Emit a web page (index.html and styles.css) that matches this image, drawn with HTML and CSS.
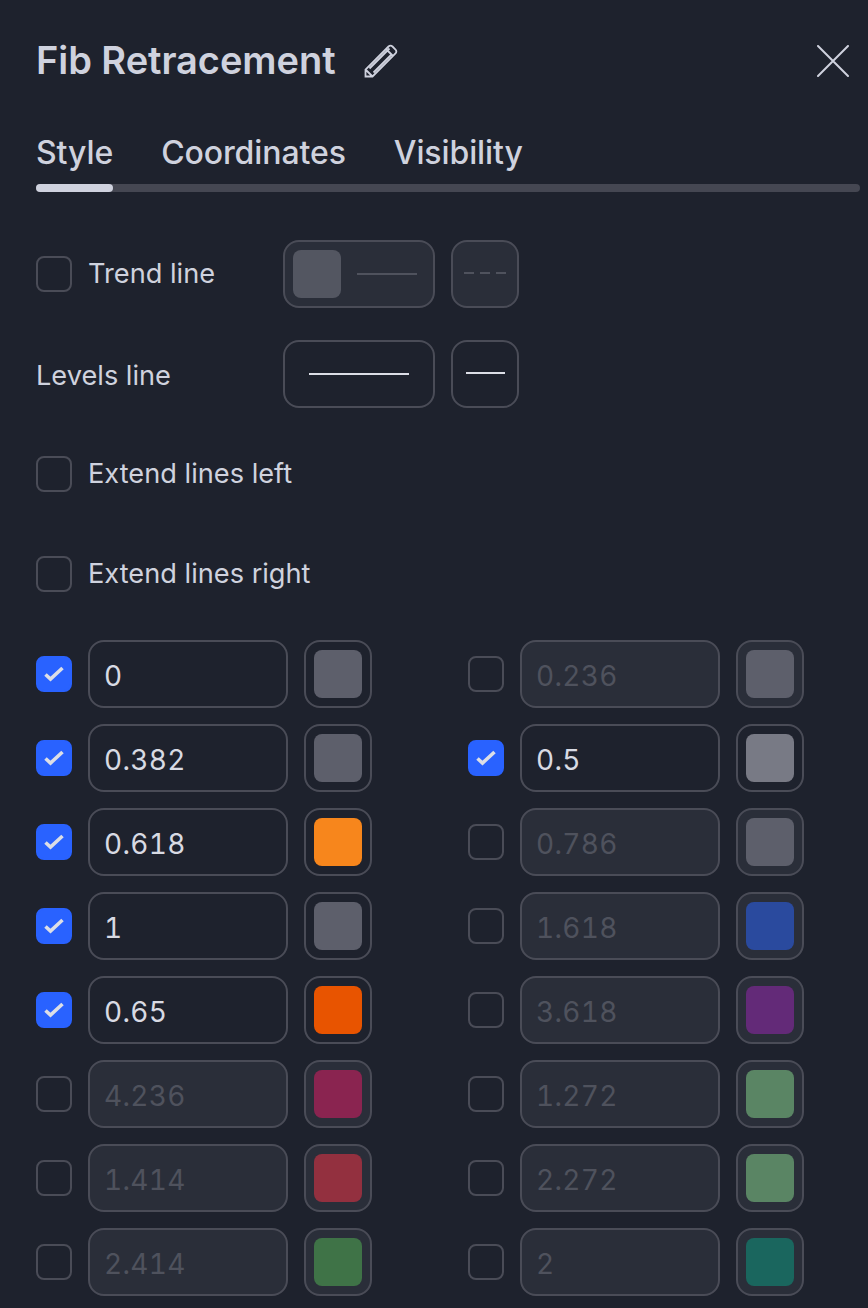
FILE: index.html
```html
<!DOCTYPE html>
<html lang="en">
<head>
<meta charset="utf-8">
<title>Fib Retracement</title>
<link rel="stylesheet" href="styles.css">
</head>
<body>
<div class="panel">
  <header class="head">
    <h1 class="title">Fib Retracement</h1>
    <svg class="pencil" viewBox="0 0 34 34" fill="none" stroke="#cfd2de" stroke-width="1.800"><path d="M1.500 32.500V25.500L24.500 2.500Q26.500 .8 28.500 2.500L31.500 5.500Q33.200 7.500 31.500 9.500L8.500 32.500ZM1.500 25.500L8.500 32.500M22 5L29 12M5.500 24.500L25.500 4.500M9.500 28.500L27.500 10.500"/></svg>
    <svg class="close" viewBox="0 0 32 32" fill="none" stroke="#cfd2de" stroke-width="2" stroke-linecap="round"><path d="M1 1L31 31M31 1L1 31"/></svg>
  </header>
  <nav class="tabs">
    <span class="tab">Style</span>
    <span class="tab">Coordinates</span>
    <span class="tab">Visibility</span>
  </nav>
  <div class="track"><div class="thumb"></div></div>

  <div class="opt opt-first">
    <div class="opt-label"><span class="check"></span><span class="opt-text">Trend line</span></div>
    <div class="field line-wide off"><span class="swatch sw-mid"></span><span class="rule rule-dim"></span></div>
    <div class="field line-small off"><span class="rule-dash"></span></div>
  </div>
  <div class="opt opt-levels">
    <div class="opt-label"><span class="opt-text opt-text-low">Levels line</span></div>
    <div class="field line-wide center"><span class="rule rule-long"></span></div>
    <div class="field line-small"><span class="rule rule-short"></span></div>
  </div>
  <div class="opt opt-left"><div class="opt-label"><span class="check"></span><span class="opt-text">Extend lines left</span></div></div>
  <div class="opt opt-right"><div class="opt-label"><span class="check"></span><span class="opt-text">Extend lines right</span></div></div>

  <div class="levels">
    <div class="lv"><span class="check on"><svg viewBox="0 0 20 16"><path d="M1.500 8.500L6.500 13L18.500 2"/></svg></span><div class="num">0</div><div class="box"><span class="swatch" style="background:#5d5f6b"></span></div></div>
    <div class="lv"><span class="check"></span><div class="num off">0.236</div><div class="box off"><span class="swatch" style="background:#5d5f6b"></span></div></div>

    <div class="lv"><span class="check on"><svg viewBox="0 0 20 16"><path d="M1.500 8.500L6.500 13L18.500 2"/></svg></span><div class="num">0.382</div><div class="box"><span class="swatch" style="background:#5d5f6b"></span></div></div>
    <div class="lv"><span class="check on"><svg viewBox="0 0 20 16"><path d="M1.500 8.500L6.500 13L18.500 2"/></svg></span><div class="num">0.5</div><div class="box"><span class="swatch" style="background:#787a85"></span></div></div>

    <div class="lv"><span class="check on"><svg viewBox="0 0 20 16"><path d="M1.500 8.500L6.500 13L18.500 2"/></svg></span><div class="num">0.618</div><div class="box"><span class="swatch" style="background:#f7861c"></span></div></div>
    <div class="lv"><span class="check"></span><div class="num off">0.786</div><div class="box off"><span class="swatch" style="background:#5d5f6b"></span></div></div>

    <div class="lv"><span class="check on"><svg viewBox="0 0 20 16"><path d="M1.500 8.500L6.500 13L18.500 2"/></svg></span><div class="num">1</div><div class="box"><span class="swatch" style="background:#5d5f6b"></span></div></div>
    <div class="lv"><span class="check"></span><div class="num off">1.618</div><div class="box off"><span class="swatch" style="background:#2a4a9e"></span></div></div>

    <div class="lv"><span class="check on"><svg viewBox="0 0 20 16"><path d="M1.500 8.500L6.500 13L18.500 2"/></svg></span><div class="num">0.65</div><div class="box"><span class="swatch" style="background:#e85400"></span></div></div>
    <div class="lv"><span class="check"></span><div class="num off">3.618</div><div class="box off"><span class="swatch" style="background:#632a78"></span></div></div>

    <div class="lv"><span class="check"></span><div class="num off">4.236</div><div class="box off"><span class="swatch" style="background:#8a2450"></span></div></div>
    <div class="lv"><span class="check"></span><div class="num off">1.272</div><div class="box off"><span class="swatch" style="background:#5a8564"></span></div></div>

    <div class="lv"><span class="check"></span><div class="num off">1.414</div><div class="box off"><span class="swatch" style="background:#93303f"></span></div></div>
    <div class="lv"><span class="check"></span><div class="num off">2.272</div><div class="box off"><span class="swatch" style="background:#5a8564"></span></div></div>

    <div class="lv"><span class="check"></span><div class="num off">2.414</div><div class="box off"><span class="swatch" style="background:#3f7347"></span></div></div>
    <div class="lv"><span class="check"></span><div class="num off">2</div><div class="box off"><span class="swatch" style="background:#1a665e"></span></div></div>
  </div>
</div>
</body>
</html>
```

FILE: styles.css
```css
* { box-sizing: border-box; }
html, body { margin: 0; height: 100%; }
body {
  background: #1e222d;
  color: #cfd2de;
  font-family: Inter, "Liberation Sans", sans-serif;
  overflow: hidden;
}
.panel { width: 868px; height: 1308px; padding: 36px 8px 0 36px; overflow: hidden; }
.head { display: flex; align-items: center; height: 50px; }
.title { margin: 0 0 2px; font-size: 38px; font-weight: 600; line-height: 48px; white-space: nowrap; letter-spacing: -.05px; }
.pencil { width: 34px; height: 34px; margin-left: 28px; }
.close { width: 32px; height: 32px; margin-left: auto; margin-right: 11px; }
.tabs { display: flex; gap: 48px; margin-top: 44px; height: 46px; }
.tab { position: relative; top: 1px; font-size: 32px; font-weight: 500; line-height: 44px; letter-spacing: -.1px; }
.track { height: 8px; margin-top: 8px; background: #454752; border-radius: 4px; }
.thumb { width: 77px; height: 8px; background: #cfd2de; border-radius: 4px; }
.opt { display: flex; align-items: center; gap: 16px; height: 68px; font-size: 27.200px; }
.opt-first { margin-top: 48px; }
.opt-levels { margin-top: 32px; }
.opt-left { margin-top: 32px; }
.opt-right { margin-top: 32px; }
.opt-label { display: flex; align-items: center; gap: 16px; flex: none; width: 231px; white-space: nowrap; }
.opt-text { position: relative; top: -1px; }
.opt-text-low { top: 1px; }
.check {
  display: flex; align-items: center; justify-content: center;
  flex: none; width: 36px; height: 36px;
  border: 2px solid #4a4c57; border-radius: 8px;
}
.check.on { background: #2962ff; border-color: #2962ff; }
.check svg { width: 20px; height: 16px; fill: none; stroke: #dcdee6; stroke-width: 3.600; }
.field {
  display: flex; align-items: center; flex: none;
  height: 68px; border: 2px solid #4a4c57; border-radius: 16px;
}
.field.off { background: #2a2e39; }
.field.center { justify-content: center; }
.line-wide { width: 152px; padding-left: 8px; }
.field.center.line-wide { padding-left: 0; }
.line-small { width: 68px; justify-content: center; padding-bottom: 2px; }
.swatch { display: block; width: 48px; height: 48px; border-radius: 8px; flex: none; }
.sw-mid { background: #535661; }
.rule { display: block; height: 2px; }
.rule-dim { width: 60px; margin-left: 16px; background: #4f525d; }
.rule-long { width: 100px; background: #dcdee6; }
.rule-short { width: 39px; background: #dcdee6; }
.rule-dash {
  display: block; width: 42px; height: 2px;
  background: repeating-linear-gradient(90deg, #4f525d 0 10px, transparent 10px 16px);
}
.levels {
  display: grid;
  grid-template-columns: 336px 336px;
  column-gap: 96px;
  row-gap: 16px;
  margin-top: 32px;
}
.lv { display: flex; align-items: center; gap: 16px; height: 68px; }
.num {
  display: flex; align-items: center;
  width: 200px; height: 68px; padding: 3px 0 0 14px;
  border: 2px solid #4a4c57; border-radius: 16px;
  font-size: 28px; font-variant-numeric: tabular-nums; letter-spacing: .3px; color: #d8dae3;
}
.num.off { background: #2a2e39; color: #4f525d; }
.box {
  display: flex; align-items: center; justify-content: center;
  width: 68px; height: 68px;
  border: 2px solid #4a4c57; border-radius: 16px;
}
.box.off { background: #2a2e39; }
```
